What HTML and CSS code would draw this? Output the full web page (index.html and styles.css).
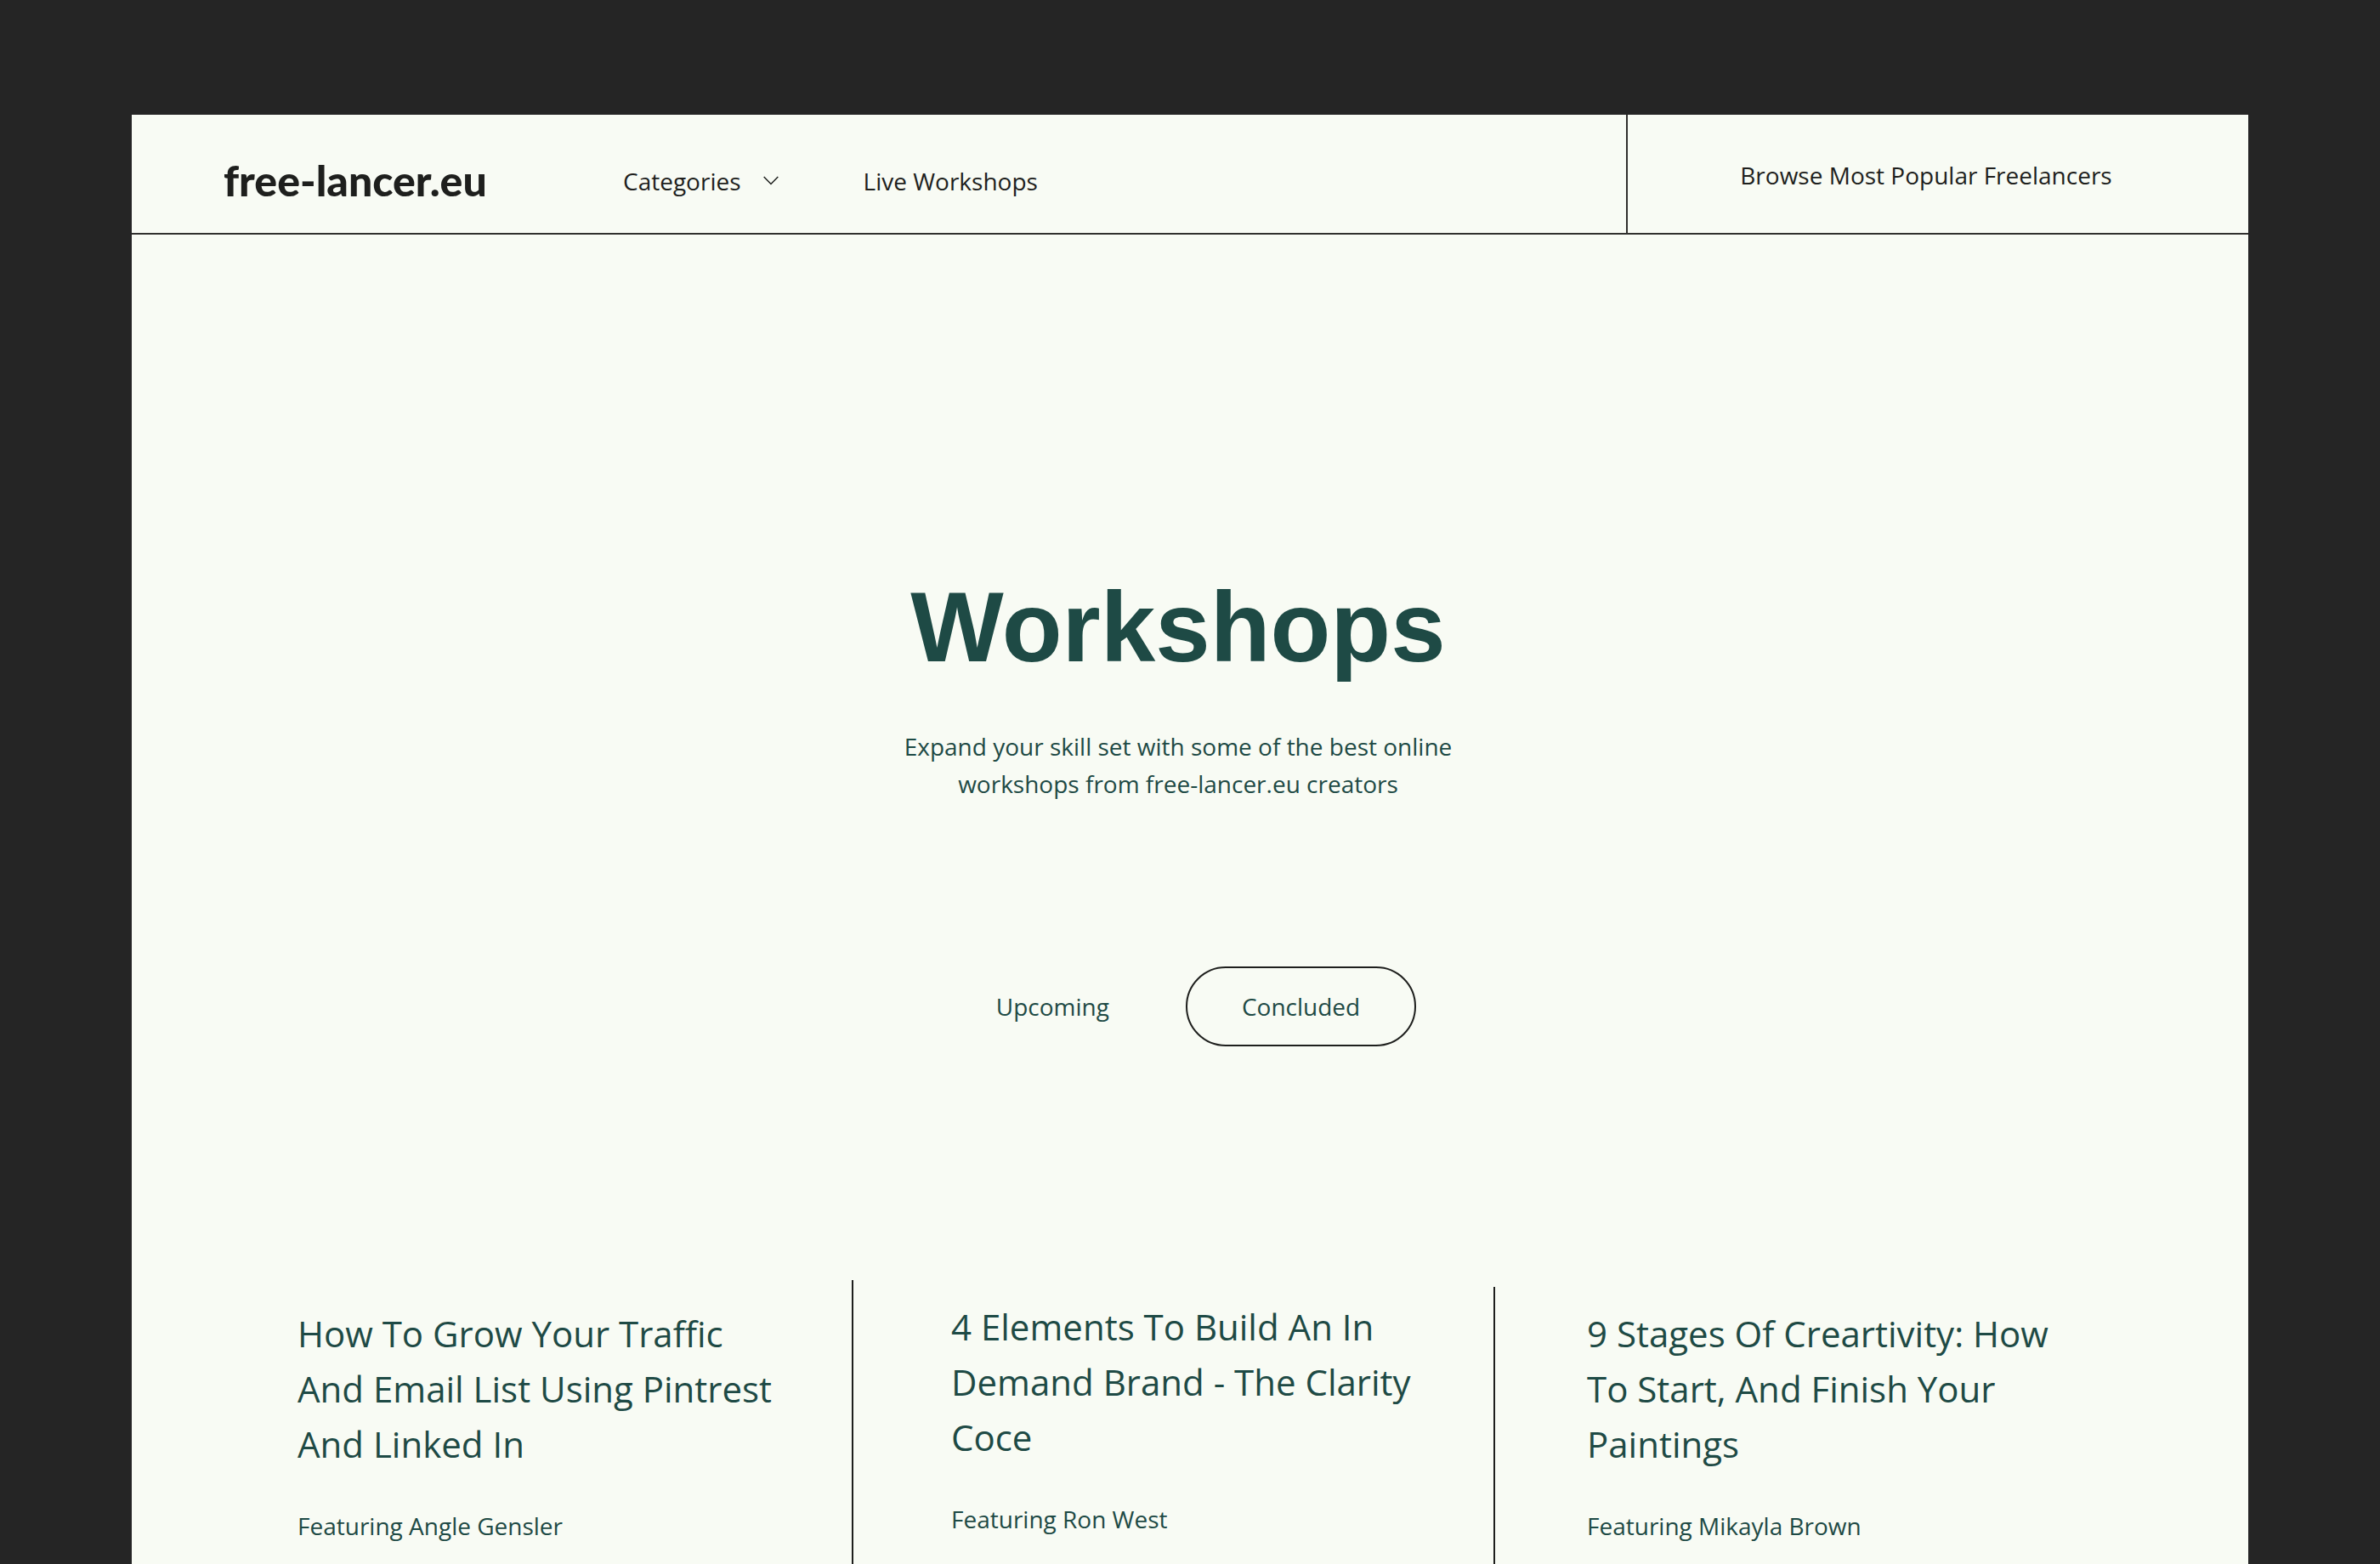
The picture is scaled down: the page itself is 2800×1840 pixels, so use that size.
FILE: index.html
```html
<!DOCTYPE html>
<html lang="en">
<head>
<meta charset="utf-8">
<title>Workshops – free-lancer.eu</title>
<link rel="stylesheet" href="styles.css">
</head>
<body>
<div class="page">
  <header class="header">
    <div class="header-main">
      <a class="logo" href="#">free-lancer.eu</a>
      <nav class="nav">
        <button class="nav-item" type="button">Categories
          <svg class="chevron" viewBox="0 0 18 11" aria-hidden="true"><path d="M0.700 1 L9 9.500 L17.300 1"/></svg>
        </button>
        <a class="nav-item" href="#">Live Workshops</a>
      </nav>
    </div>
    <a class="browse" href="#">Browse Most Popular Freelancers</a>
  </header>
  <main class="main">
    <section class="hero">
      <h1 class="hero-title">Workshops</h1>
      <p class="hero-text">Expand your skill set with some of the best online<br>workshops from free-lancer.eu creators</p>
      <div class="tabs">
        <button class="tab" type="button">Upcoming</button>
        <button class="tab tab-active" type="button">Concluded</button>
      </div>
    </section>
    <section class="workshops">
      <article class="workshop">
        <h2 class="workshop-title">How To Grow Your Traffic<br>And Email List Using Pintrest<br>And Linked In</h2>
        <p class="workshop-host">Featuring Angle Gensler</p>
      </article>
      <article class="workshop workshop-raised">
        <h2 class="workshop-title">4 Elements To Build An In<br>Demand Brand - The Clarity<br>Coce</h2>
        <p class="workshop-host">Featuring Ron West</p>
      </article>
      <article class="workshop">
        <h2 class="workshop-title">9 Stages Of Creartivity: How<br>To Start, And Finish Your<br>Paintings</h2>
        <p class="workshop-host">Featuring Mikayla Brown</p>
      </article>
    </section>
  </main>
</div>
</body>
</html>
```
FILE: styles.css
```css
* { box-sizing: border-box; }

body {
  margin: 0;
  min-height: 100vh;
  display: flex;
  padding: 135px 155px 0;
  background: #252525;
  color: #1e4a45;
  font: 28px/44px "Open Sans", "Noto Sans", sans-serif;
}

h1, h2, p { margin: 0; font-weight: 400; }
a { color: inherit; text-decoration: none; }
button {
  padding: 0;
  border: 0;
  background: none;
  color: inherit;
  font: inherit;
  cursor: pointer;
}

.page {
  flex: 1;
  display: flex;
  flex-direction: column;
  background: #f8fbf4;
}

.header {
  display: flex;
  min-height: 141px;
  border-bottom: 2px solid #30302e;
  color: #1e1f1d;
}
.header-main {
  flex: 1;
  display: flex;
  align-items: center;
  gap: 156px;
  padding: 16px 108px 0;
}
.logo {
  min-width: 314px;
  padding-bottom: 2px;
  font: 900 50px/56px Lato, sans-serif;
}
.nav { display: flex; gap: 100px; }
.nav-item { display: flex; align-items: center; gap: 26px; }
.chevron {
  width: 18px;
  height: 11px;
  fill: none;
  stroke: currentColor;
  stroke-width: 1.5;
}
.browse {
  flex: 0 0 732px;
  display: flex;
  align-items: center;
  justify-content: center;
  padding: 2px 28px 0 0;
  border-left: 2px solid #30302e;
}

.main { flex: 1; display: flex; flex-direction: column; }
.hero {
  display: flex;
  flex-direction: column;
  align-items: center;
  padding: 392px 28px 283px 0;
  text-align: center;
}
.hero-title { font: 700 116px/140px "Liberation Sans", Arial, sans-serif; }
.hero-text { margin-top: 48px; }
.tabs { display: flex; gap: 24px; margin-top: 193px; }
.tab {
  height: 94px;
  padding: 0 64px;
  border: 2px solid transparent;
  border-radius: 47px;
}
.tab-active { border-color: #1e1f1d; }

.workshops {
  flex: 1;
  display: grid;
  grid-template-columns: 847fr 755fr 888fr;
}
.workshop { padding: 22px 0 0 108px; border-left: 2px solid #1e1f1d; }
.workshop:first-child { padding-left: 195px; border-left: 0; }
.workshop-raised { margin-top: -8px; padding-left: 115px; }
.workshop-title { font-size: 42px; line-height: 65px; }
.workshop-host { margin-top: 42px; }
```
